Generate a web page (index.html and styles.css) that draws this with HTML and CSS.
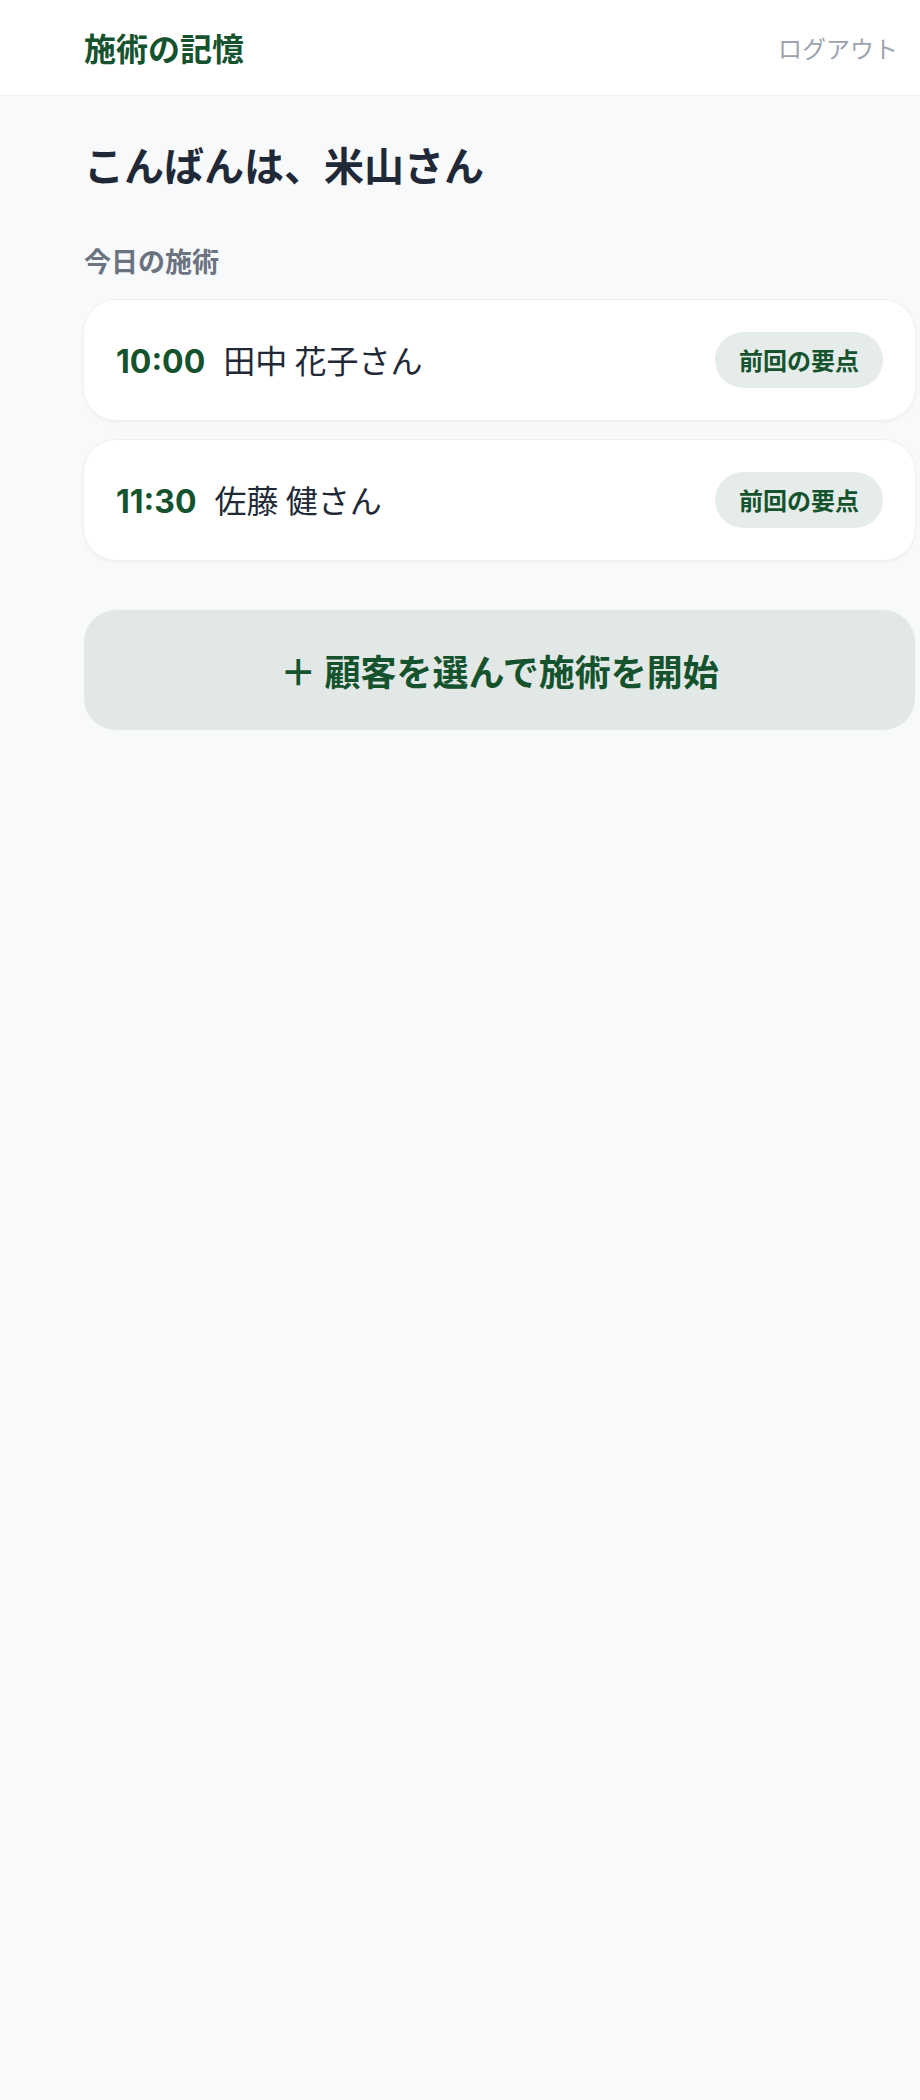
FILE: index.html
```html
<!DOCTYPE html>
<html lang="ja">
<head>
<meta charset="utf-8">
<title>施術の記憶</title>
<link rel="stylesheet" href="styles.css">
</head>
<body>
<header class="topbar">
  <div class="logo">施術の記憶</div>
  <a class="logout" href="#">ログアウト</a>
</header>
<main class="main">
  <h1 class="greeting">こんばんは、米山さん</h1>
  <h2 class="section-label">今日の施術</h2>
  <ul class="appointments">
    <li class="card">
      <div class="card-info">
        <span class="time">10:00</span>
        <span class="name">田中 花子さん</span>
      </div>
      <button class="pill">前回の要点</button>
    </li>
    <li class="card">
      <div class="card-info">
        <span class="time">11:30</span>
        <span class="name">佐藤 健さん</span>
      </div>
      <button class="pill">前回の要点</button>
    </li>
  </ul>
  <button class="start-btn">＋ 顧客を選んで施術を開始</button>
</main>
</body>
</html>
```

FILE: styles.css
```css
* {
  box-sizing: border-box;
}

html, body {
  margin: 0;
  padding: 0;
}

body {
  background: #f8f9fa;
  font-family: Inter, "Noto Sans CJK JP", sans-serif;
  color: #1f2937;
  min-height: 2100px;
}

.topbar {
  height: 96px;
  background: #ffffff;
  border-bottom: 1px solid #eef0f2;
  display: flex;
  align-items: center;
  justify-content: space-between;
  padding: 0 22px 0 84px;
}

.logo {
  font-family: "Noto Sans CJK JP", sans-serif;
  font-size: 32px;
  font-weight: 700;
  color: #14532d;
  line-height: 1.4;
}

.logout {
  font-family: "Noto Sans CJK JP", sans-serif;
  font-size: 24px;
  color: #9ca3af;
  text-decoration: none;
  line-height: 1.4;
}

.main {
  padding: 40px 5px 0 84px;
}

.greeting {
  margin: 0;
  font-family: "Noto Sans CJK JP", sans-serif;
  font-size: 40px;
  line-height: 56px;
  font-weight: 700;
  color: #1f2937;
}

.section-label {
  margin: 50px 0 0;
  font-family: "Noto Sans CJK JP", sans-serif;
  font-size: 27px;
  line-height: 38px;
  font-weight: 700;
  color: #6b7280;
}

.appointments {
  list-style: none;
  margin: 20px 0 0;
  padding: 0;
  display: flex;
  flex-direction: column;
  gap: 20px;
}

.card {
  background: #ffffff;
  border-radius: 32px;
  box-shadow: 0 0 0 1px #eef0f2, 0 2px 4px rgba(0, 0, 0, 0.05);
  padding: 32px 32px;
  display: flex;
  align-items: center;
  justify-content: space-between;
}

.card-info {
  display: flex;
  align-items: baseline;
  gap: 18px;
}

.time {
  font-family: Inter, sans-serif;
  font-size: 32px;
  font-weight: 700;
  color: #14532d;
  line-height: 44px;
}

.name {
  font-family: "Noto Sans CJK JP", sans-serif;
  font-size: 32px;
  font-weight: 400;
  color: #1f2937;
  line-height: 44px;
}

.pill {
  border: none;
  background: #e6ece9;
  color: #14532d;
  font-family: "Noto Sans CJK JP", sans-serif;
  font-size: 24px;
  font-weight: 700;
  line-height: 32px;
  height: 56px;
  padding: 12px 24px;
  border-radius: 999px;
  cursor: pointer;
}

.start-btn {
  display: block;
  width: 100%;
  margin-top: 50px;
  height: 120px;
  border: none;
  border-radius: 32px;
  background: #e1e8e5;
  color: #14532d;
  font-family: "Noto Sans CJK JP", sans-serif;
  font-size: 36px;
  font-weight: 700;
  cursor: pointer;
}
```
